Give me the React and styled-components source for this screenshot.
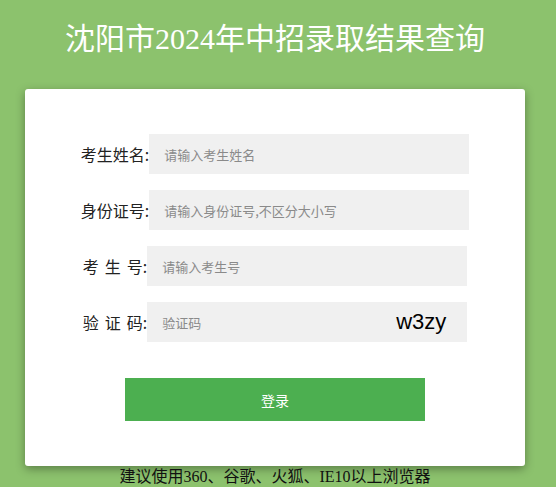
import React from "react";
import styled, { createGlobalStyle } from "styled-components";

const GlobalStyle = createGlobalStyle`
  html, body {
    margin: 0;
    padding: 0;
    background: #ffffff;
  }
  body {
    font-family: "Noto Sans CJK SC", "Noto Sans", sans-serif;
  }
  * { box-sizing: border-box; }
`;

const Page = styled.div`
  background: #8cc26d;
  width: 556px;
  padding: 19px 6px 0 0;
  display: flex;
  flex-direction: column;
  align-items: center;
`;

const Title = styled.h1`
  margin: 0 0 30px;
  height: 40px;
  line-height: 40px;
  font-size: 30px;
  font-weight: normal;
  color: #ffffff;
  font-family: "Liberation Serif", "Noto Sans CJK SC", serif;
  text-align: center;
  width: 550px;
`;

const Card = styled.form`
  width: 500px;
  background: #ffffff;
  border-radius: 3px;
  box-shadow: 0 3px 10px rgba(0, 0, 0, 0.35);
  padding: 45px 0 45px;
  display: flex;
  flex-direction: column;
  align-items: center;
  gap: 16px;
`;

const Row = styled.div`
  display: flex;
  align-items: center;
  justify-content: center;
  width: 100%;
`;

const Label = styled.label`
  font-size: 16px;
  color: #222222;
  font-family: "Noto Sans CJK SC", sans-serif;
  white-space: pre;
  word-spacing: 2.5px;
  line-height: 20px;
`;

const Field = styled.div`
  width: 320px;
  height: 40px;
  background: #f0f0f0;
  display: flex;
  align-items: center;
  padding: 0 21px 0 15px;
`;

const Input = styled.input`
  flex: 1;
  min-width: 0;
  height: 100%;
  border: none;
  outline: none;
  background: transparent;
  padding: 0;
  font-size: 13px;
  font-family: "Noto Sans CJK SC", sans-serif;
  color: #333;
  &::placeholder {
    color: #8a8a8a;
  }
`;

const Code = styled.span`
  font-family: "Liberation Sans", Arial, sans-serif;
  font-size: 22px;
  color: #000000;
`;

const Button = styled.button`
  margin-top: 20px;
  width: 300px;
  height: 43px;
  border: none;
  background: #4caf50;
  color: #ffffff;
  font-size: 14px;
  font-family: "Noto Sans CJK SC", sans-serif;
  cursor: pointer;
`;

const Footer = styled.p`
  margin: 0;
  width: 550px;
  text-align: center;
  font-size: 16px;
  line-height: 21px;
  color: #111111;
  font-family: "Liberation Serif", "Noto Sans CJK SC", serif;
`;

const fields = [
  { label: "考生姓名:", placeholder: "请输入考生姓名" },
  { label: "身份证号:", placeholder: "请输入身份证号,不区分大小写" },
  { label: "考 生 号:", placeholder: "请输入考生号" },
  { label: "验 证 码:", placeholder: "验证码", code: "w3zy" },
];

export default function App() {
  return (
    <>
      <GlobalStyle />
      <Page>
        <Title>沈阳市2024年中招录取结果查询</Title>
        <Card onSubmit={(e) => e.preventDefault()}>
          {fields.map((f) => (
            <Row key={f.label}>
              <Label>{f.label}</Label>
              <Field>
                <Input placeholder={f.placeholder} />
                {f.code && <Code>{f.code}</Code>}
              </Field>
            </Row>
          ))}
          <Button type="submit">登录</Button>
        </Card>
        <Footer>建议使用360、谷歌、火狐、IE10以上浏览器</Footer>
      </Page>
    </>
  );
}
